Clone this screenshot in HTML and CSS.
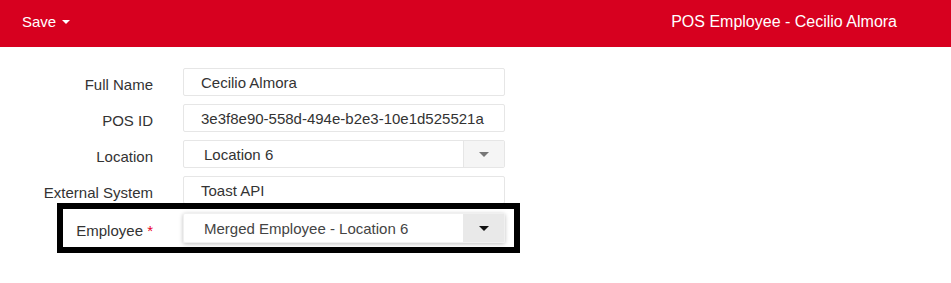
FILE: index.html
```html
<!DOCTYPE html>
<html lang="en">
<head>
    <meta charset="UTF-8">
    <meta name="viewport" content="width=device-width, initial-scale=1.0">
    <title>POS Employee</title>
    <link rel="stylesheet" href="styles.css">
</head>
<body>
    <div class="topbar">
        <div class="save-menu">Save <span class="caret"></span></div>
        <div class="page-title">POS Employee - Cecilio Almora</div>
    </div>

    <div class="form">
        <div class="form-row">
            <label>Full Name</label>
            <div class="field">Cecilio Almora</div>
        </div>
        <div class="form-row">
            <label>POS ID</label>
            <div class="field">3e3f8e90-558d-494e-b2e3-10e1d525521a</div>
        </div>
        <div class="form-row">
            <label>Location</label>
            <div class="select">
                <span class="select-value">Location 6</span>
                <span class="select-btn"><span class="arrow"></span></span>
            </div>
        </div>
        <div class="form-row">
            <label>External System</label>
            <div class="field">Toast API</div>
        </div>
        <div class="form-row highlighted">
            <label>Employee <span class="required">*</span></label>
            <div class="select active">
                <span class="select-value">Merged Employee - Location 6</span>
                <span class="select-btn"><span class="arrow"></span></span>
            </div>
        </div>
    </div>
</body>
</html>
```

FILE: styles.css
```css
/* General Styles */
* {
    box-sizing: border-box;
}

body {
    font-family: "Liberation Sans", Arial, sans-serif;
    background-color: #ffffff;
    color: #333333;
    margin: 0;
    padding: 0;
    min-height: 100vh;
}

.topbar {
    height: 47px;
    background-color: #d7001f;
    color: #ffffff;
    display: flex;
    justify-content: space-between;
    align-items: center;
    padding: 0 54px 4px 22px;
}

.save-menu {
    font-size: 15px;
    display: flex;
    align-items: center;
    gap: 6px;
}

.caret {
    width: 0;
    height: 0;
    border-left: 4px solid transparent;
    border-right: 4px solid transparent;
    border-top: 4px solid #ffffff;
}

.page-title {
    font-size: 16px;
}

.form {
    display: flex;
    flex-direction: column;
    gap: 8px;
    padding: 21px 0 40px 8px;
}

.form-row {
    display: grid;
    grid-template-columns: 145px 322px;
    column-gap: 30px;
    align-items: center;
    width: fit-content;
    height: 28px;
}

.form-row label {
    text-align: right;
    font-size: 15px;
    padding-top: 5px;
}

.required {
    color: #e8002a;
}

.field {
    height: 28px;
    border: 1px solid #e6e6e6;
    border-radius: 2px;
    padding: 0 17px;
    display: flex;
    align-items: center;
    font-size: 15px;
    color: #333333;
}

.select {
    height: 28px;
    border: 1px solid #e6e6e6;
    border-radius: 2px;
    display: flex;
    font-size: 15px;
    color: #333333;
}

.select-value {
    flex: 1;
    display: flex;
    align-items: center;
    padding-left: 20px;
}

.select-btn {
    width: 41px;
    border-left: 1px solid #e6e6e6;
    background-color: #f5f5f5;
    display: flex;
    align-items: center;
    justify-content: center;
}

.arrow {
    width: 0;
    height: 0;
    border-left: 5px solid transparent;
    border-right: 5px solid transparent;
    border-top: 5px solid #777777;
}

/* highlighted row */
.highlighted {
    position: relative;
}

.highlighted::after {
    content: "";
    position: absolute;
    top: -9px;
    bottom: -13px;
    left: 49px;
    right: -15px;
    border: 6px solid #000000;
    pointer-events: none;
}

.select.active {
    height: 30px;
    margin-top: 1px;
    border-color: #f0f0f0;
    box-shadow: 0 1px 4px rgba(0, 0, 0, 0.25);
    color: #444444;
}

.select.active .select-btn {
    background-color: #e9e9e9;
    border-left: none;
}

.select.active .arrow {
    border-top-color: #111111;
}
```
